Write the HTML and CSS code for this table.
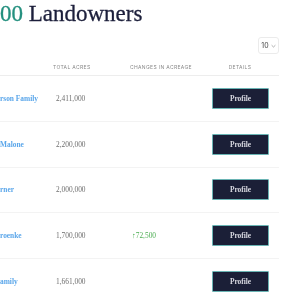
FILE: index.html
```html
<!DOCTYPE html>
<html>
<head>
<meta charset="utf-8">
<link rel="stylesheet" href="styles.css">
</head>
<body>
<div class="page">
  <h1 class="title"><span class="num">00</span> Landowners</h1>
  <div class="controls">
    <div class="select"><span>10</span>
      <svg class="chev" width="5" height="4" viewBox="0 0 5 4"><path d="M0.6 1.2 L2.5 3 L4.4 1.2" fill="none" stroke="#999" stroke-width="0.8"/></svg>
    </div>
  </div>
  <div class="table">
    <div class="row head">
      <div class="c name"></div>
      <div class="c acres">Total Acres</div>
      <div class="c change">Changes in Acreage</div>
      <div class="c details">Details</div>
    </div>
    <div class="row">
      <div class="c name"><a href="#">rson Family</a></div>
      <div class="c acres">2,411,000</div>
      <div class="c change"></div>
      <div class="c details"><button class="btn">Profile</button></div>
    </div>
    <div class="row">
      <div class="c name"><a href="#">Malone</a></div>
      <div class="c acres">2,200,000</div>
      <div class="c change"></div>
      <div class="c details"><button class="btn">Profile</button></div>
    </div>
    <div class="row">
      <div class="c name"><a href="#">rner</a></div>
      <div class="c acres">2,000,000</div>
      <div class="c change"></div>
      <div class="c details"><button class="btn">Profile</button></div>
    </div>
    <div class="row">
      <div class="c name"><a href="#">roenke</a></div>
      <div class="c acres">1,700,000</div>
      <div class="c change up">↑72,500</div>
      <div class="c details"><button class="btn">Profile</button></div>
    </div>
    <div class="row">
      <div class="c name"><a href="#">amily</a></div>
      <div class="c acres">1,661,000</div>
      <div class="c change"></div>
      <div class="c details"><button class="btn">Profile</button></div>
    </div>
  </div>
</div>
</body>
</html>
```
FILE: styles.css
```css
html, body {
  margin: 0;
  padding: 0;
  background: #ffffff;
  overflow: hidden;
}
.page {
  width: 279px;
  padding: 0;
  will-change: transform;
}
.title {
  margin: 0;
  padding-top: 1px;
  height: 31px;
  font-family: "Liberation Serif", serif;
  font-weight: normal;
  font-size: 23px;
  line-height: 26px;
  color: #1c1f3b;
  -webkit-text-stroke: 0.3px currentColor;
  white-space: nowrap;
}
.title .num {
  color: #24907f;
}
.controls {
  display: flex;
  justify-content: flex-end;
  padding-top: 5px;
}
.select {
  width: 21px;
  height: 17px;
  box-sizing: border-box;
  border: 1px solid #ebebeb;
  border-radius: 3px;
  display: flex;
  align-items: center;
  justify-content: center;
  gap: 2px;
  font-family: "Inter", "Liberation Sans", sans-serif;
  font-size: 7px;
  color: #444;
}
.table {
  margin-top: 5px;
}
.row {
  display: grid;
  grid-template-columns: 53px 77px 71px 78px;
  align-items: center;
  height: 45.75px;
  box-sizing: border-box;
  border-bottom: 1px solid #f3f3f3;
}
.row.head {
  height: 17px;
  border-bottom: 1px solid #ededed;
}
.head .c {
  font-family: "Inter", "Liberation Sans", sans-serif;
  font-size: 5px;
  letter-spacing: 0.35px;
  text-transform: uppercase;
  color: #8a8a8a;
}
.c {
  font-family: "Liberation Serif", serif;
  font-size: 7.4px;
  white-space: nowrap;
}
.name a {
  color: #5aa6ea;
  font-weight: bold;
  text-decoration: none;
}
.acres {
  color: #6e6e6e;
  padding-left: 3px;
}
.head .acres {
  padding-left: 0;
}
.change {
  color: #6e6e6e;
}
.change.up {
  color: #4cae52;
  padding-left: 2px;
}
.details {
  text-align: center;
}
.btn {
  width: 57px;
  height: 21px;
  background: #1b1f37;
  border: 1px solid #6ab4b4;
  border-radius: 1px;
  color: #d9dae2;
  font-family: "Liberation Serif", serif;
  font-weight: bold;
  font-size: 7.4px;
  padding: 0;
  margin-left: 1px;
}
```
